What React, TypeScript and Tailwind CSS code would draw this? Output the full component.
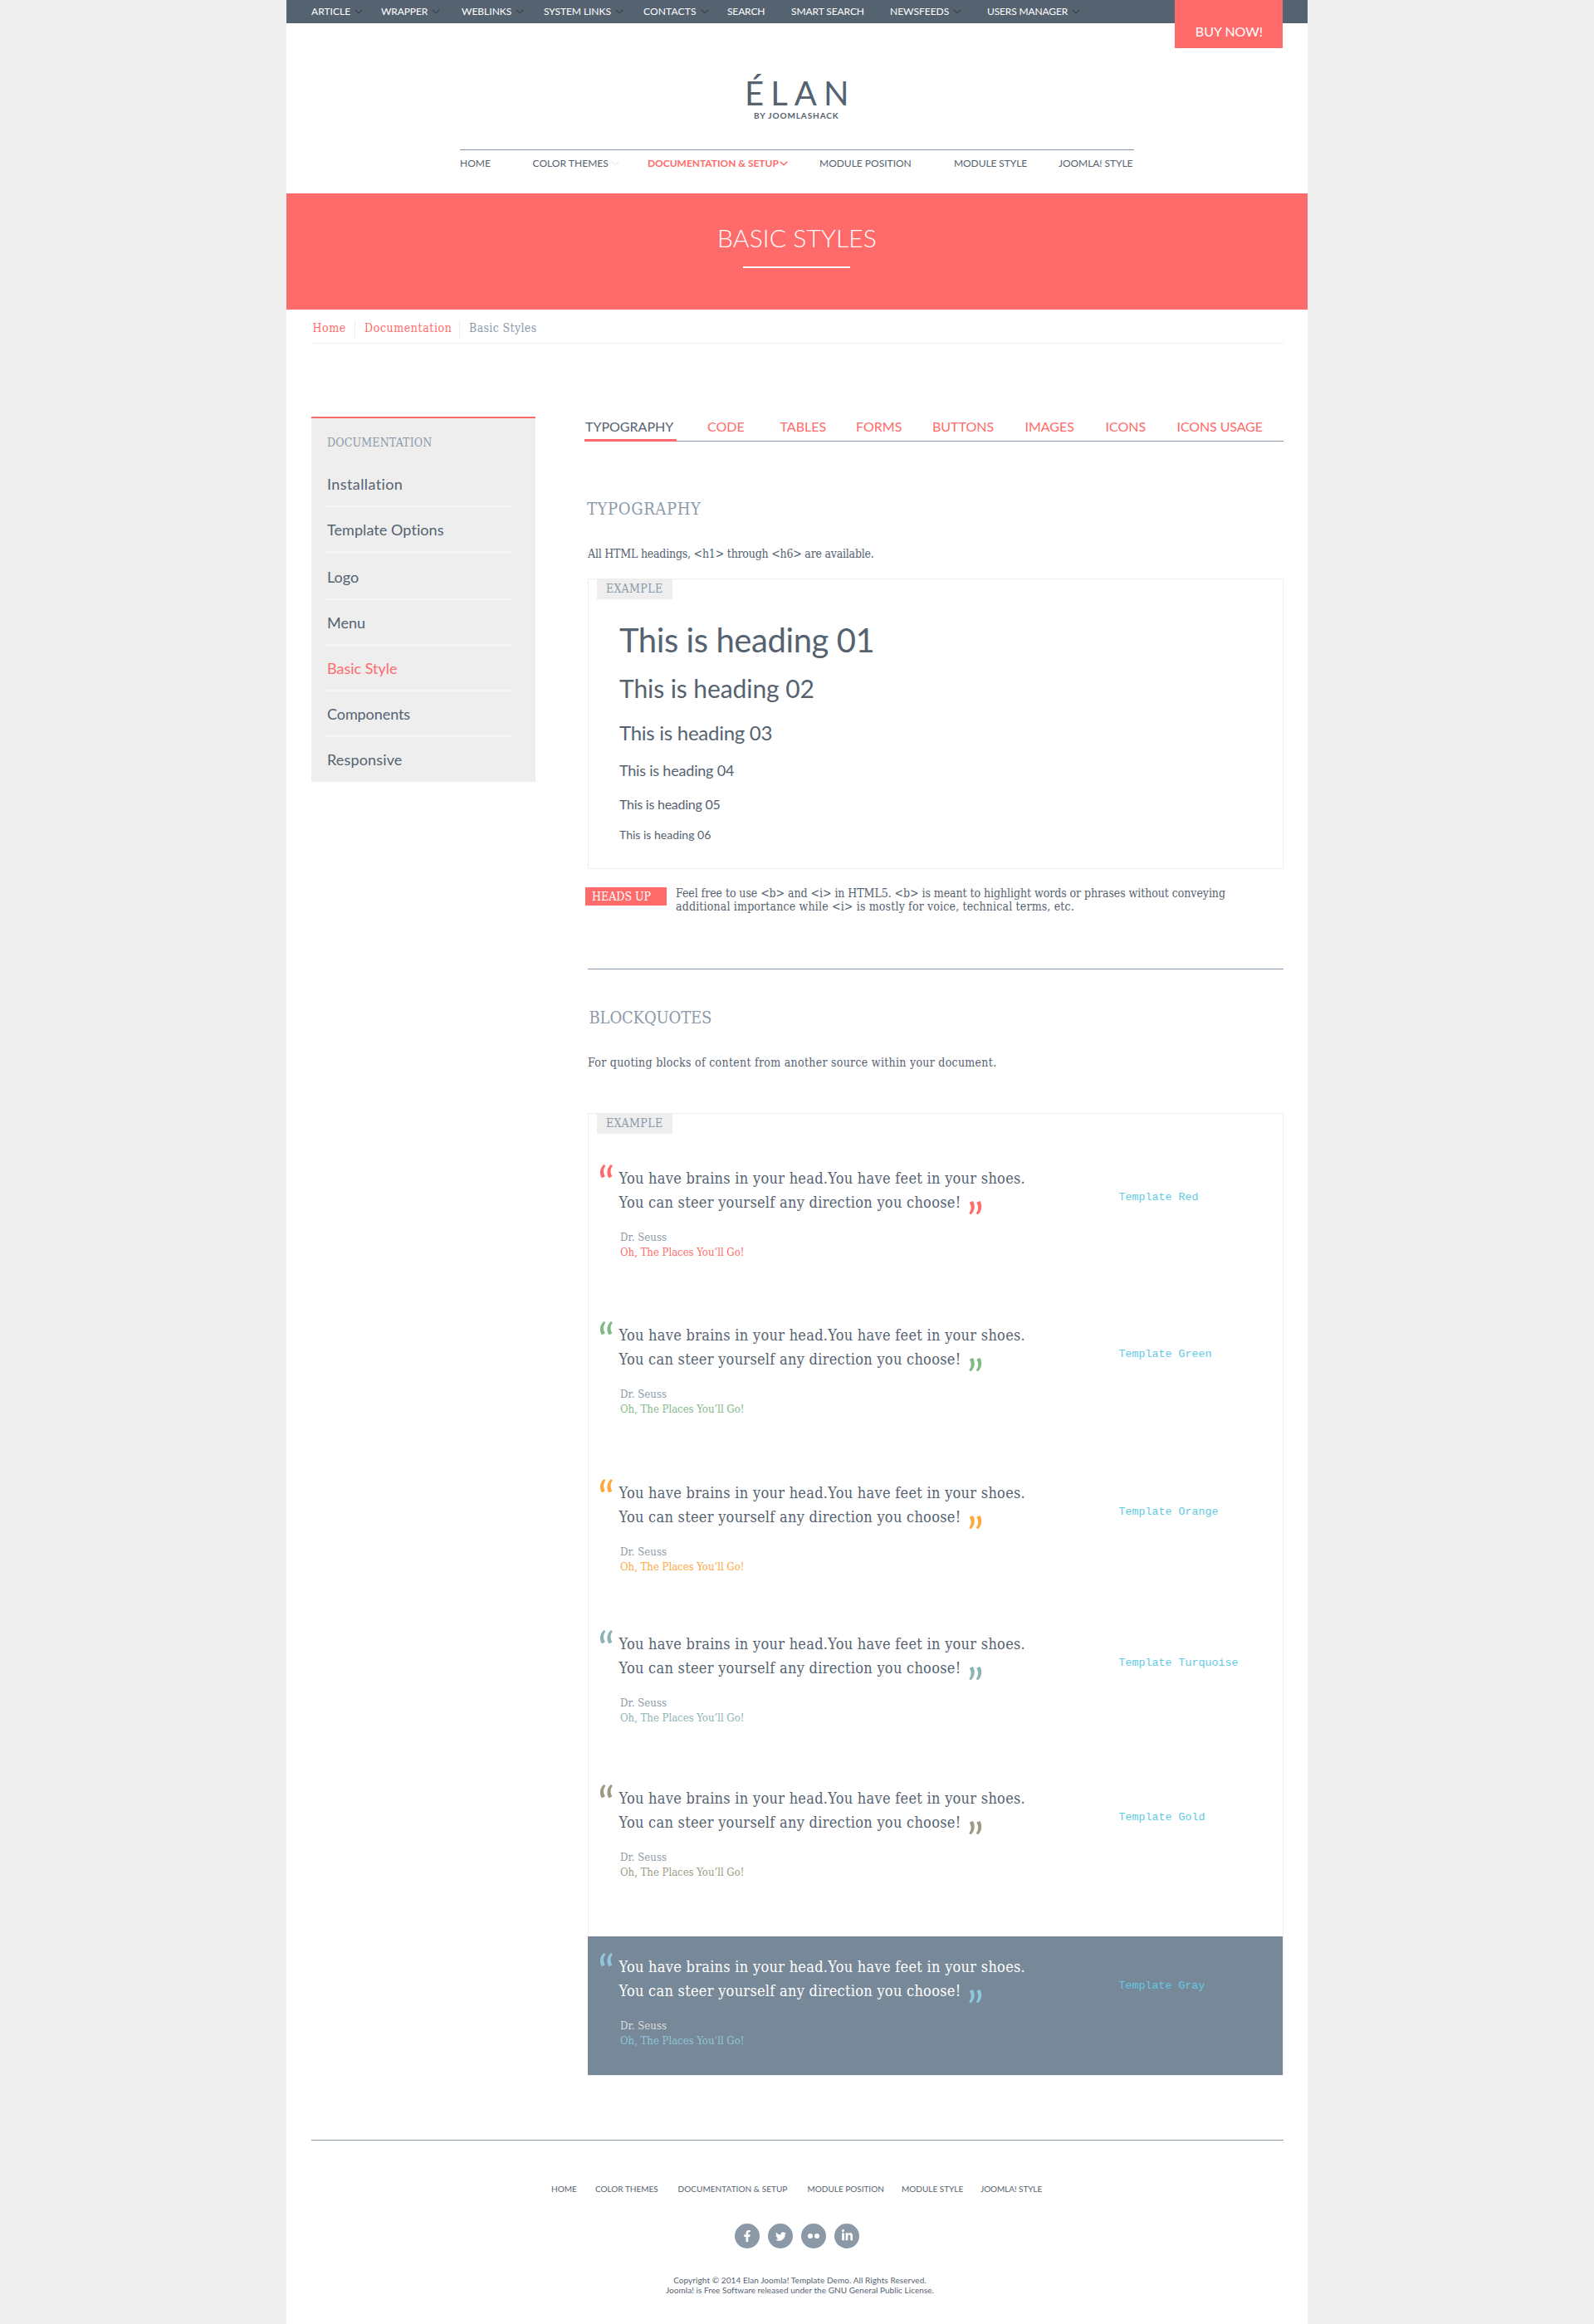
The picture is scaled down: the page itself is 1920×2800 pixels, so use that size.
import React from "react";
import { FaFacebookF, FaLinkedinIn, FaTwitter } from "react-icons/fa";

function Chevron({ className }: { className: string }) {
  return (
    <svg viewBox="0 0 10 6" className={`h-[6px] w-[10px] shrink-0 ${className}`} fill="none">
      <path d="M0.8 0.9 L5 4.8 L9.2 0.9" stroke="currentColor" strokeWidth="1.5" />
    </svg>
  );
}

type Item = { label: string; box: string; chevron?: boolean };

const topLinks: Item[] = [
  { label: "ARTICLE", box: "w-[84px] tracking-[0.05px]", chevron: true },
  { label: "WRAPPER", box: "w-[97px] tracking-[-0.1px]", chevron: true },
  { label: "WEBLINKS", box: "w-[99px]", chevron: true },
  { label: "SYSTEM LINKS", box: "w-[120px] tracking-[-0.05px]", chevron: true },
  { label: "CONTACTS", box: "w-[101px] tracking-[0.15px]", chevron: true },
  { label: "SEARCH", box: "w-[77px] tracking-[-0.15px]" },
  { label: "SMART SEARCH", box: "w-[119px] tracking-[-0.09px]" },
  { label: "NEWSFEEDS", box: "w-[117px]", chevron: true },
  { label: "USERS MANAGER", box: "w-[130px] tracking-[-0.14px]", chevron: true },
];

const sideLinks: Item[] = [
  { label: "Installation", box: "mt-[34px] tracking-[0.4px]" },
  { label: "Template Options", box: "mt-[31px] tracking-[0.07px]" },
  { label: "Logo", box: "mt-[33px]" },
  { label: "Menu", box: "mt-[31px]" },
  { label: "Basic Style", box: "mt-[31px] text-[#ff6b6b]" },
  { label: "Components", box: "mt-[31px] tracking-[-0.08px]" },
  { label: "Responsive", box: "mt-[31px] tracking-[0.15px]" },
];

const tabs: Item[] = [
  { label: "CODE", box: "ml-[37px] w-[87.5px]" },
  { label: "TABLES", box: "w-[91.5px]" },
  { label: "FORMS", box: "w-[92px]" },
  { label: "BUTTONS", box: "w-[111.5px]" },
  { label: "IMAGES", box: "w-[97px]" },
  { label: "ICONS", box: "w-[86px]" },
  { label: "ICONS USAGE", box: "tracking-[-0.1px]" },
];

const headings: Item[] = [
  { label: "This is heading 01", box: "mt-[25px] text-[40px] leading-[48px] tracking-[-0.43px]" },
  { label: "This is heading 02", box: "mt-[16px] text-[30px] leading-[36px] tracking-[-0.08px]" },
  { label: "This is heading 03", box: "mt-[21px] text-[24px] leading-[29px] tracking-[-0.27px]" },
  { label: "This is heading 04", box: "mt-[20px] text-[18px] leading-[22px] tracking-[-0.2px]" },
  { label: "This is heading 05", box: "mt-[20px] text-[16px] leading-[19px] tracking-[-0.25px]" },
  { label: "This is heading 06", box: "mt-[19px] text-[14px] leading-[17px]" },
];

type Quote = { name: string; color: string; box: string; text: string; author: string };

const quotes: Quote[] = [
  { name: "Red", color: "text-[#ff6b6b]", box: "mt-[39px] h-[189px]", text: "text-[#556270]", author: "text-[#8b9aa8]" },
  { name: "Green", color: "text-[#82b989]", box: "h-[190px]", text: "text-[#556270]", author: "text-[#8b9aa8]" },
  { name: "Orange", color: "text-[#ffa83d]", box: "h-[182px]", text: "text-[#556270]", author: "text-[#8b9aa8]" },
  { name: "Turquoise", color: "text-[#8cb3b4]", box: "h-[186px]", text: "text-[#556270]", author: "text-[#8b9aa8]" },
  { name: "Gold", color: "text-[#9c9a84]", box: "h-[181px]", text: "text-[#556270]", author: "text-[#8b9aa8]" },
  {
    name: "Gray",
    color: "text-[#8fc7da]",
    box: "-ml-px h-[167px] w-[837px] bg-[#778898] pl-px pt-[22px]",
    text: "text-white",
    author: "text-[#dddddd]",
  },
];

const footerLinks: Item[] = [
  { label: "HOME", box: "w-[53px]" },
  { label: "COLOR THEMES", box: "w-[99.5px]" },
  { label: "DOCUMENTATION & SETUP", box: "w-[156px] tracking-[0.06px]" },
  { label: "MODULE POSITION", box: "w-[113.5px]" },
  { label: "MODULE STYLE", box: "w-[95px]" },
  { label: "JOOMLA! STYLE", box: "tracking-[-0.08px]" },
];

function ExampleTag() {
  return (
    <div className="ml-[10px] h-6 w-[91px] bg-[#eeeeee] pl-[11px] text-[14px] leading-[22px] tracking-[0.42px] text-[#8b9aa8]">
      EXAMPLE
    </div>
  );
}

function QuoteBlock({ name, color, box, text, author }: Quote) {
  return (
    <div className={box}>
      <div className="flex">
        <span className={`-mt-[8px] ml-[11px] h-[56px] w-[25.5px] shrink-0 font-[Lato] text-[56px] leading-[56px] ${color}`}>
          “
        </span>
        <div className="w-[602px] shrink-0 whitespace-nowrap">
          <blockquote className={`text-[18px] leading-[29px] tracking-[0.29px] ${text}`}>
            You have brains in your head.You have feet in your shoes.
            <br />
            <span className="relative">
              You can steer yourself any direction you choose!
              <span className={`absolute top-[3px] left-full ml-[7px] font-[Lato] text-[56px] leading-[56px] tracking-normal ${color}`}>
                ”
              </span>
            </span>
          </blockquote>
          <div className="mt-[19px] pl-[1.5px] text-[13px] leading-[18px]">
            <p className={`tracking-[0.07px] ${author}`}>Dr. Seuss</p>
            <p className={color}>Oh, The Places You’ll Go!</p>
          </div>
        </div>
        <code className="mt-[30px] font-['Liberation_Mono',monospace] text-[13.33px] leading-[15px] text-[#5fcae6]">
          Template {name}
        </code>
      </div>
    </div>
  );
}

export default function App() {
  return (
    <div className="min-h-[2800px] bg-[#eeeeee] font-['DejaVu_Serif_Condensed','DejaVu_Serif',serif] text-[#556270]">
      <div className="relative mx-auto h-[2800px] w-[1230px] bg-white">
        <nav className="flex h-7 bg-[#556270] pl-[30px] font-[Lato] text-[12px] leading-[27px] text-white">
          {topLinks.map((l) => (
            <a key={l.label} className={`flex shrink-0 gap-[5px] whitespace-nowrap ${l.box}`}>
              {l.label}
              {l.chevron && <Chevron className="mt-[11px] text-[#3d4854]" />}
            </a>
          ))}
        </nav>
        <a className="absolute right-[30px] top-0 h-[58px] w-[130px] bg-[#ff6b6b] pl-px pt-[25px] text-center font-[Lato] text-[16px] leading-[25px] text-white">
          BUY NOW!
        </a>

        <header className="flex h-[205px] flex-col font-[Lato]">
          <div className="ml-[552px] mt-[61px] text-[40px] leading-[46px] tracking-[8.1px]">ÉLAN</div>
          <div className="-mt-[1px] ml-[563px] text-[10px] font-bold leading-[10px] tracking-[0.9px]">BY JOOMLASHACK</div>
          <nav className="ml-[209px] mt-9 flex w-[812px] whitespace-nowrap border-t border-[#8a98a8] pt-2 text-[12px] leading-[15px]">
            <a className="w-[87.5px]">HOME</a>
            <a className="flex w-[138.5px] gap-[3px] tracking-[0.05px]">
              COLOR THEMES
              <Chevron className="mt-[5px] text-[#eeeeee]" />
            </a>
            <a className="flex w-[207px] gap-[1px] font-bold tracking-[-0.02px] text-[#ff6b6b]">
              DOCUMENTATION &amp; SETUP
              <Chevron className="mt-[5px]" />
            </a>
            <a className="w-[162px]">MODULE POSITION</a>
            <a className="w-[126px] tracking-[-0.08px]">MODULE STYLE</a>
            <a className="tracking-[-0.06px]">JOOMLA! STYLE</a>
          </nav>
        </header>

        <section className="flex h-[140px] flex-col items-center bg-[#ff6b6b] pt-[35px] text-white">
          <h1 className="font-[Lato] text-[30px] font-light leading-9 tracking-[0.11px]">BASIC STYLES</h1>
          <div className="mr-px mt-[17px] h-[2px] w-[129px] bg-white" />
        </section>

        <div className="mx-[30px] mt-[13px] flex h-7 w-[1171px] border-b border-[#eeeeee] text-[14px] leading-[18px] text-[#ff6b6b]">
          <a className="w-[52px] pl-[1.5px] tracking-[0.56px]">Home</a>
          <a className="h-[22px] w-[126px] border-l border-[#eeeeee] pl-[11px] tracking-[0.6px]">Documentation</a>
          <span className="h-[22px] border-l border-[#eeeeee] pl-[11px] tracking-[0.37px] text-[#8b9aa8]">Basic Styles</span>
        </div>

        <div className="ml-[30px] mt-[88px] flex w-[1171px] items-start justify-between">
          <aside className="h-[440px] w-[270px] border-t-2 border-[#ff6b6b] bg-[#eeeeee] pl-[19px] pt-[21px]">
            <h2 className="text-[14px] leading-4 tracking-[0.15px] text-[#8b9aa8]">DOCUMENTATION</h2>
            <ul className="-mt-[3px] -ml-[3px] w-[225px] font-[Lato] text-[18px]">
              {sideLinks.map((l, i) => (
                <li
                  key={l.label}
                  className={`pl-[3px] leading-[22px] ${l.box} ${i < 6 ? "-mb-[15px] border-b-2 border-[#f5f5f5] pb-[15px]" : ""}`}
                >
                  {l.label}
                </li>
              ))}
            </ul>
          </aside>

          <main className="w-[842px] pt-[2px]">
            <nav className="flex h-7 whitespace-nowrap border-b border-[#8a98a8] font-[Lato] text-[16px] leading-[19px] text-[#ff6b6b]">
              <a className="h-7 w-[111px] shrink-0 border-b-[3px] border-[#ff6b6b] pl-[1px] text-[#556270]">TYPOGRAPHY</a>
              {tabs.map((t) => (
                <a key={t.label} className={`shrink-0 ${t.box}`}>
                  {t.label}
                </a>
              ))}
            </nav>

            <section className="pl-1">
              <h2 className="-ml-px mt-[69px] text-[20px] leading-6 tracking-[0.61px] text-[#8b9aa8]">TYPOGRAPHY</h2>
              <p className="mt-[34px] text-[14px] leading-4 tracking-[-0.21px]">
                All HTML headings, &lt;h1&gt; through &lt;h6&gt; are available.
              </p>
              <div className="mt-[22px] h-[350px] border border-[#eeeeee]">
                <ExampleTag />
                <div className="pl-[37px] font-[Lato]">
                  {headings.map((h) => (
                    <p key={h.label} className={h.box}>
                      {h.label}
                    </p>
                  ))}
                </div>
              </div>
              <div className="-ml-[3px] mt-[21px] flex text-[14px]">
                <div className="mt-px h-[22px] w-[98px] bg-[#ff6b6b] pl-[8px] leading-[22px] text-white">HEADS UP</div>
                <p className="ml-[11px] whitespace-nowrap leading-4">
                  <span className="tracking-[-0.06px]">
                    Feel free to use &lt;b&gt; and &lt;i&gt; in HTML5. &lt;b&gt; is meant to highlight words or phrases without conveying
                  </span>
                  <br />
                  <span className="tracking-[0.17px]">
                    additional importance while &lt;i&gt; is mostly for voice, technical terms, etc.
                  </span>
                </p>
              </div>
              <hr className="mt-[67px] border-t border-[#8a98a8]" />
            </section>

            <section className="pl-1">
              <h2 className="ml-[1.5px] mt-[46px] text-[20px] leading-6 tracking-[-0.15px] text-[#8b9aa8]">BLOCKQUOTES</h2>
              <p className="mt-[34px] text-[14px] leading-4 tracking-[0.3px]">
                For quoting blocks of content from another source within your document.
              </p>
              <div className="mt-[53px] h-[1160px] border border-[#eeeeee]">
                <ExampleTag />
                {quotes.map((q) => (
                  <QuoteBlock key={q.name} {...q} />
                ))}
              </div>
            </section>
          </main>
        </div>

        <footer className="mx-[30px] mt-[77px] flex w-[1171px] flex-col border-t border-[#8a98a8] font-[Lato] text-[10px] leading-3">
          <nav className="ml-[289px] mt-[52px] flex whitespace-nowrap">
            {footerLinks.map((l) => (
              <a key={l.label} className={`shrink-0 ${l.box}`}>
                {l.label}
              </a>
            ))}
          </nav>
          <div className="ml-[510px] mt-9 flex gap-[10px] text-white">
            <span className="flex size-[30px] items-center justify-center rounded-full bg-[#8b99a6]">
              <FaFacebookF size={14} />
            </span>
            <span className="flex size-[30px] items-center justify-center rounded-full bg-[#8b99a6]">
              <FaTwitter size={13} />
            </span>
            <span className="flex size-[30px] items-center justify-center gap-[2px] rounded-full bg-[#8b99a6]">
              <span className="size-[6px] rounded-full bg-white" />
              <span className="size-[6px] rounded-full bg-white" />
            </span>
            <span className="flex size-[30px] items-center justify-center rounded-full bg-[#8b99a6]">
              <FaLinkedinIn size={15} className="-mt-[2px]" />
            </span>
          </div>
          <p className="mt-8 pl-[6px] text-center">
            <span className="tracking-[0.08px]">Copyright © 2014 Elan Joomla! Template Demo. All Rights Reserved.</span>
            <br />
            <span className="tracking-[0.05px]">Joomla! is Free Software released under the GNU General Public License.</span>
          </p>
        </footer>
      </div>
    </div>
  );
}
